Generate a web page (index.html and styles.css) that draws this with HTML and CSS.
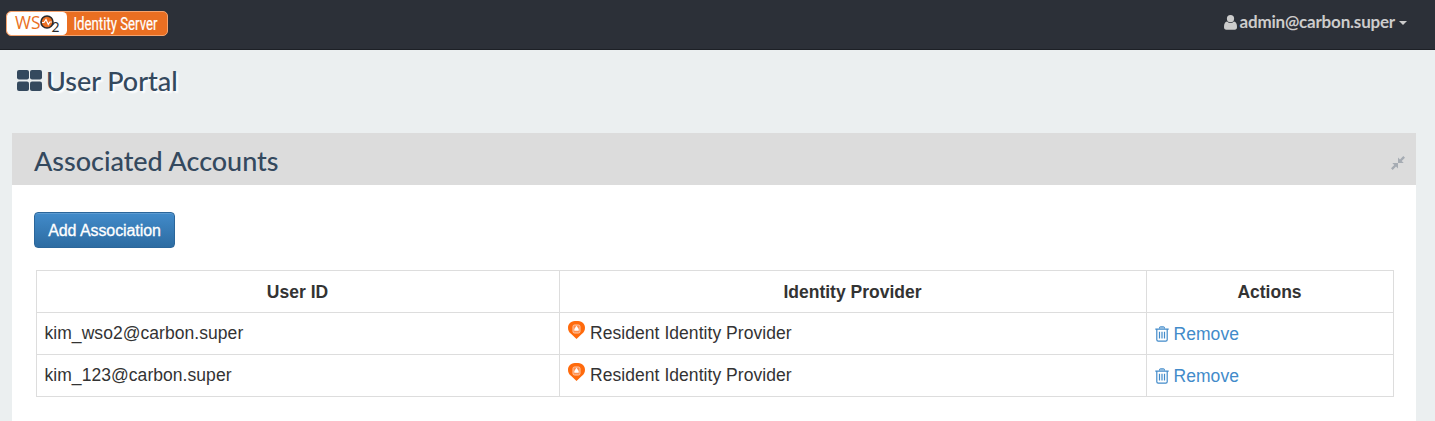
FILE: index.html
```html
<!DOCTYPE html>
<html lang="en">
<head>
<meta charset="utf-8">
<title>User Portal</title>
<link rel="stylesheet" href="styles.css">
</head>
<body>
<svg class="sprite" aria-hidden="true">
  <symbol id="trash" viewBox="0 0 14 16"><path d="M4.500 2.500V1.600Q4.500.8 5.300.8h3.400q.8 0 .8.8v.9" fill="#a9cbe8" stroke="currentColor"/><path d="M.3 3.200h13.400M1.800 3.200v10.600q0 1.400 1.400 1.400h7.600q1.400 0 1.400-1.400V3.200M4.500 5.800v6.700M7 5.800v6.700M9.500 5.800v6.700" fill="none" stroke="currentColor" stroke-width="1.200"/></symbol>
  <symbol id="idp" viewBox="0 0 17 18"><path d="M8.500 0C13 0 17 1.800 17 6.800c0 3-1.200 4.600-3 6L8.500 18 3 12.800c-1.800-1.400-3-3-3-6C0 1.800 4 0 8.500 0z" fill="#ff6a0c"/><rect x="5" y="4" width="7" height="8" rx="1.500" fill="#ff8f4f" stroke="#ffc8a6"/><path d="M8.500 4.800l2.200 3.200v1.800H6.300V8z" fill="#fff"/></symbol>
</svg>
<header class="topbar">
  <svg class="logo" width="162" height="25" viewBox="0 0 162 25">
    <rect x=".5" y=".5" width="161" height="24" rx="4.500" fill="#ea6f22" stroke="#f4a36f"/>
    <rect x="1" y="1" width="60" height="23" rx="4.500" fill="#fff"/>
    <text class="logo-ws" x="9" y="17.500" textLength="25.500" lengthAdjust="spacingAndGlyphs">WS</text>
    <circle cx="41" cy="11" r="6" fill="#ea6f22" stroke="#2b2b2b" stroke-width="1.600"/>
    <path d="M36 11.500h2l2-3 2.300 5 1.500-2.500h2" fill="none" stroke="#fff" stroke-width="1.200"/>
    <text class="logo-two" x="45.500" y="20.500" textLength="8" lengthAdjust="spacingAndGlyphs">2</text>
    <text class="logo-name" x="67.500" y="18.500" textLength="84" lengthAdjust="spacingAndGlyphs">Identity Server</text>
  </svg>
  <div class="user">
    <svg width="13" height="15" viewBox="0 0 13 15" fill="currentColor"><circle cx="6.500" cy="3.700" r="3.600"/><path d="M3 6.500q3.500 3 7 0 3 .5 3 5.500 0 2.700-2.300 2.700H2.300Q0 14.700 0 12 0 7 3 6.500z"/></svg>
    <span class="user-name">admin@carbon.super</span>
    <i class="caret"></i>
  </div>
</header>
<main>
  <h1 class="title">
    <svg width="25" height="21" viewBox="0 0 25 21" fill="currentColor"><rect width="12" height="9.500" rx="2"/><rect x="13" width="12" height="9.500" rx="2"/><rect y="11.500" width="12" height="9.500" rx="2"/><rect x="13" y="11.500" width="12" height="9.500" rx="2"/></svg>
    <span>User Portal</span>
  </h1>
  <section class="panel">
    <div class="panel-head">
      <h2>Associated Accounts</h2>
      <svg width="14" height="14" viewBox="0 0 14 14" fill="#a6acb3"><path d="M7 7V1.500l2 2L12.300 0 14 1.700 10.700 5l2 2zM7 7v5.500l-2-2L1.700 14 0 12.300 3.300 9l-2-2z"/></svg>
    </div>
    <div class="panel-body">
      <button class="add">Add Association</button>
      <table class="accounts">
        <colgroup><col class="col-user"><col class="col-idp"><col class="col-act"></colgroup>
        <tr><th>User ID</th><th>Identity Provider</th><th>Actions</th></tr>
        <tr><td>kim_wso2@carbon.super</td><td><div class="cell"><svg class="idp"><use href="#idp"/></svg>Resident Identity Provider</div></td><td><a class="cell remove"><svg class="trash"><use href="#trash"/></svg>Remove</a></td></tr>
        <tr><td>kim_123@carbon.super</td><td><div class="cell"><svg class="idp"><use href="#idp"/></svg>Resident Identity Provider</div></td><td><a class="cell remove"><svg class="trash"><use href="#trash"/></svg>Remove</a></td></tr>
      </table>
    </div>
  </section>
</main>
</body>
</html>
```
FILE: styles.css
```css
* { box-sizing: border-box; }
body { margin: 0; height: 421px; overflow: hidden; background: #ebeff0; color: #333; font-family: "Liberation Sans", Arial, sans-serif; font-size: 17.5px; }
.sprite { display: none; }
.topbar { height: 50px; padding: 11px 28px 0 6px; display: flex; justify-content: space-between; align-items: flex-start; background: #2c3038; border-bottom: 1px solid #1d2026; }
.logo { overflow: visible; }
.logo-ws { font: 17.5px "Open Sans", sans-serif; fill: #ea6f22; }
.logo-two { font: 13px Lato, sans-serif; fill: #2b2b2b; }
.logo-name { font: 400 18px Roboto, sans-serif; fill: #fff; stroke: #fff; stroke-width: .2px; }
.user { display: flex; align-items: center; height: 22px; color: #ccc; font: bold 17px/22px Lato, sans-serif; }
.user-name { margin-left: 3px; letter-spacing: -.2px; }
.caret { margin: 1px 0 0 4px; border: 4px solid transparent; border-top-color: #ccc; border-bottom: 0; }
.title { display: flex; align-items: center; gap: 4px; height: 36px; margin: 13px 0 34px 17px; color: #34495e; font: 500 27px/36px Lato, sans-serif; letter-spacing: -.04px; text-shadow: 2px 2px 2px #fff; }
.title svg { margin-top: -2px; }
.panel { margin: 0 19px 0 12px; background: #fff; height: 300px; }
.panel-head { height: 52px; padding: 0 11px 0 22px; background: #dcdcdc; display: flex; justify-content: space-between; align-items: center; }
.panel-head svg { margin-top: 8px; }
.panel-head h2 { margin: 4px 0 0; color: #34495e; font: 500 27px/36px Lato, sans-serif; letter-spacing: -.05px; }
.panel-body { padding: 27px 22px; }
.add { display: block; width: 141px; height: 36px; padding: 2px 0 0; color: #fff; font: 16px "Liberation Sans", Arial, sans-serif; letter-spacing: -.08px; -webkit-text-stroke: .3px #fff; background: linear-gradient(#428bca, #2d6ca2); border: 1px solid #2b669a; border-radius: 4px; box-shadow: inset 0 1px 0 rgba(255,255,255,.15); }
.accounts { width: 1358px; margin: 22px 0 0 2px; table-layout: fixed; border-collapse: collapse; }
.col-user { width: 523px; }
.col-idp { width: 587px; }
.accounts th, .accounts td { height: 42px; padding: 0 8px; border: 1px solid #ddd; line-height: 24px; }
.accounts th { padding-right: 8px; padding-left: 7px; }
.accounts td { padding: 0 7px 2px 7.5px; letter-spacing: .05px; }
.cell { display: flex; align-items: center; }
.idp { width: 17px; height: 18px; margin: -5px 5px 0 .5px; }
.trash { width: 14px; height: 16px; margin-right: 5px; }
.remove { color: #428bca; position: relative; top: 1px; }
```
